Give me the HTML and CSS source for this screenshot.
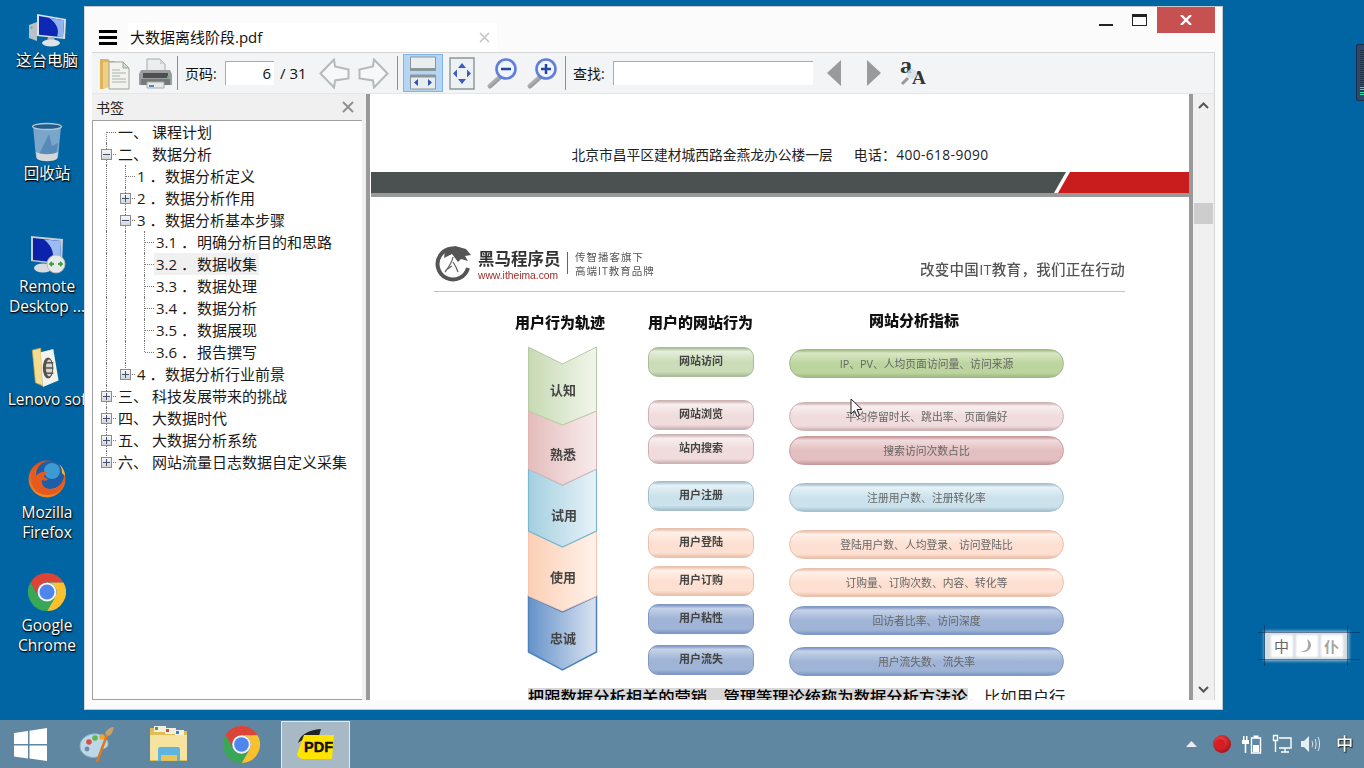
FILE: index.html
```html
<!DOCTYPE html>
<html lang="zh-CN">
<head>
<meta charset="utf-8">
<title>大数据离线阶段.pdf</title>
<link rel="stylesheet" href="styles.css">
</head>
<body>
<svg class="defs" width="0" height="0">
  <defs>
    <symbol id="chrome" viewBox="0 0 48 48">
      <path fill="#db4437" d="M3.2 12A24 24 0 0 1 44.8 12L24 12A12 12 0 0 0 13.6 30Z"/>
      <path fill="#fbc02d" d="M44.8 12A24 24 0 0 1 24 48L34.4 30A12 12 0 0 0 24 12Z"/>
      <path fill="#3aa757" d="M24 48A24 24 0 0 1 3.2 12L13.6 30A12 12 0 0 0 34.4 30Z"/>
      <circle cx="24" cy="24" r="12" fill="#f4f4f4"/>
      <circle cx="24" cy="24" r="9.5" fill="#4f86ec"/>
    </symbol>
    <symbol id="monitor" viewBox="0 0 40 36">
      <path fill="#b9c0c8" d="M2 14l8-3v19l-8 -3z"/>
      <path fill="#6fb36f" d="M3.5 15.5h2v2h-2z"/>
      <path fill="#dfe3e7" d="M10 3l29 5-1 20-28-3z"/>
      <path fill="#0c28b4" d="M12 5l25 4.300-1 17-24-2.600z"/>
      <path fill="#8fb4ee" d="M22 6.700l15 2.600-1 17-6-.7c3-7-1-14-8-18.900z"/>
      <path fill="#aeb6bd" d="M21 26h6l1 4h-8z"/>
      <ellipse cx="24" cy="32" rx="9" ry="3.500" fill="#dfe3e6"/>
    </symbol>
    <linearGradient id="zoomh" x1="0" y1="0" x2="1" y2="1"><stop offset="0" stop-color="#d8d8d8"/><stop offset="1" stop-color="#777"/></linearGradient>
    <linearGradient id="chG" x1="0" x2="1"><stop offset="0" stop-color="#c7d9b2"/><stop offset="1" stop-color="#f1f6ec"/></linearGradient>
    <linearGradient id="chR" x1="0" x2="1"><stop offset="0" stop-color="#e5bcbc"/><stop offset="1" stop-color="#f8ecec"/></linearGradient>
    <linearGradient id="chB" x1="0" x2="1"><stop offset="0" stop-color="#a3cfe0"/><stop offset="1" stop-color="#e8f3f8"/></linearGradient>
    <linearGradient id="chP" x1="0" x2="1"><stop offset="0" stop-color="#fbcfb6"/><stop offset="1" stop-color="#fff2ea"/></linearGradient>
    <linearGradient id="chN" x1="0" x2="1"><stop offset="0" stop-color="#6592c9"/><stop offset="1" stop-color="#dbe4f1"/></linearGradient>
    <radialGradient id="fox" cx=".45" cy=".75" r=".8"><stop offset="0" stop-color="#f9a12e"/><stop offset="1" stop-color="#d8451b"/></radialGradient>
    <radialGradient id="ball" cx=".4" cy=".35" r=".7"><stop offset="0" stop-color="#f0484c"/><stop offset="1" stop-color="#a80f14"/></radialGradient>
  </defs>
</svg>

<div class="desktop">
  <div class="icons">
    <div class="dicon">
      <svg class="dimg" width="40" height="36"><use href="#monitor"/></svg>
      <div class="dlabel">这台电脑</div>
    </div>
    <div class="dicon">
      <svg class="dimg" width="32" height="40" viewBox="0 0 32 40">
        <path fill="#7ba6cb" d="M2 4h28l-3 32H5z"/>
        <path fill="#3f78ad" d="M11 26l7-14 3 12 6-3-2 13H7z" opacity=".6"/>
        <path fill="#d5d8d8" d="M5 30c6 3 16 3 22 0l-1 7c-5 3-15 3-20 0z"/>
        <ellipse cx="16" cy="4.500" rx="14.500" ry="3" fill="#1e5e8e" stroke="#b7c4cc" stroke-width="1.300"/>
      </svg>
      <div class="dlabel">回收站</div>
    </div>
    <div class="dicon">
      <svg class="dimg" width="40" height="40" viewBox="0 0 40 40">
        <path fill="#c9ced3" d="M4 1l32 3-1 26-31-4z"/>
        <path fill="#0b22ab" d="M6 3l28 3-1 22-27-3z"/>
        <path fill="#9cbcf0" d="M17 4.500l17 1.500-1 22-8-1c3-8 0-16-8-22.500z"/>
        <ellipse cx="16" cy="33" rx="9" ry="4.500" fill="#d8dcdf"/>
        <circle cx="29" cy="29" r="9" fill="#e7eaea" stroke="#b5bcbc"/>
        <path fill="none" stroke="#3fa13a" stroke-width="1.800" d="M23 29h4m-2-2l-2 2 2 2M35 29h-4m2-2l2 2-2 2"/>
      </svg>
      <div class="dlabel">Remote<br>Desktop ...</div>
    </div>
    <div class="dicon">
      <svg class="dimg" width="32" height="42" viewBox="0 0 30 40">
        <path fill="#f5dc8e" stroke="#c8a24a" stroke-width=".7" d="M1 3l8-2 2 36-7-3z"/>
        <path fill="#f3f3ee" d="M9 5l12-3 5 30-15 6z"/>
        <ellipse cx="16" cy="20" rx="5" ry="10" fill="#55534e"/>
        <ellipse cx="17" cy="20" rx="3" ry="8" fill="#d8d6cf"/>
        <path stroke="#55534e" stroke-width="1.600" d="M13 15h8M13 20h8M13 25h8"/>
      </svg>
      <div class="dlabel">Lenovo sof</div>
    </div>
    <div class="dicon">
      <svg class="dimg dimg-top" width="38" height="38" viewBox="0 0 38 38">
        <circle cx="19" cy="19" r="18.500" fill="url(#fox)"/>
        <circle cx="22" cy="15" r="14" fill="#1d5ea8"/>
        <circle cx="24" cy="11" r="8" fill="#3d9bd4"/>
        <path fill="#e8591e" d="M5 8c-3 7-3 17 3 23 7 6 18 5 24-1 4-4 5-9 5-13-2 7-9 13-15 12-6 0-9-5-8-9 2 1 5 1 6-1l-4-2c0-2 1-3 3-5-5-1-9 1-11 4 0-3-2-6-3-8z"/>
        <path fill="#f8b33a" d="M31 4c4 3 6 8 6 12l-3-3c0-4-1-6-3-9z"/>
      </svg>
      <div class="dlabel">Mozilla<br>Firefox</div>
    </div>
    <div class="dicon">
      <svg class="dimg dimg-top" width="38" height="38"><use href="#chrome"/></svg>
      <div class="dlabel">Google<br>Chrome</div>
    </div>
  </div>

  <div class="sidegadget"><i class="gstripes"></i><i class="glights"></i></div>

  <div class="ime">
    <span class="imetile"><span class="imeglyph">中</span></span>
    <span class="imetile"><svg width="16" height="16" viewBox="0 0 18 18"><path fill="#a5a5a5" d="M9 1c6 3 6 11 0 14-2 1-5 1-8 0 4 0 8-1 9-5 1-3 0-6-1-9z"/></svg></span>
    <span class="imetile"><span class="imeglyph imegrey">仆</span></span>
  </div>

  <main class="window">
    <div class="titlebar">
      <div class="hamburger"><i></i><i></i><i></i></div>
      <div class="tab">
        <span class="tabtitle">大数据离线阶段.pdf</span>
        <svg class="tabx" width="11" height="11" viewBox="0 0 11 11"><path stroke="#c3c3c3" stroke-width="1.500" d="M1 1l9 9M10 1l-9 9"/></svg>
      </div>
      <div class="caption">
        <span class="capmin"></span>
        <span class="capmax"></span>
        <span class="capclose">
          <svg width="12" height="10" viewBox="0 0 12 10"><path stroke="#fff" stroke-width="2.400" d="M1 0l10 10M11 0L1 10"/></svg>
        </span>
      </div>
    </div>

    <div class="inner">
      <div class="toolbar">
        <svg class="ti ti-open" width="30" height="33" viewBox="0 0 30 33">
          <path fill="#dcb45c" d="M0 2h8l2 2h5v26H6l-3 2H0z"/>
          <path fill="#efd083" d="M3 5h9v24l-9 3z"/>
          <path fill="#f2f3ee" stroke="#9aa39a" d="M9 5h14l6 6v21H9z"/>
          <path stroke="#a9b2a9" d="M12 13h8M12 16h14M12 19h8M12 22h14M12 25h14"/>
          <path fill="#d4dad4" stroke="#9aa39a" d="M23 5v6h6z"/>
        </svg>
        <svg class="ti ti-print" width="33" height="31" viewBox="0 0 33 31">
          <path fill="#eceeed" stroke="#a4aaa8" d="M8 1h13l5 5v8H8z"/>
          <path fill="#cfd3d2" d="M21 1v5h5z"/>
          <path fill="#9b9e9e" d="M2 12h29l2 4v11H0V16z"/>
          <path fill="#4c4f50" d="M4 15h25v5H4z"/>
          <path fill="#757878" d="M2 21h29v6H2z"/>
          <path fill="#39c46e" d="M28 18h2v2h-2z"/>
          <path fill="#e7e9e8" stroke="#a4aaa8" d="M8 24h17v6H8z"/>
          <path fill="#4a8ac5" d="M10 27h5v2h-5z"/>
        </svg>
        <span class="tsep"></span>
        <span class="tlabel">页码:</span>
        <span class="tinput tpage">6</span>
        <span class="ttotal">/ 31</span>
        <svg class="ti ti-prev" width="31" height="31" viewBox="0 0 31 31">
          <path fill="#f7f8f9" stroke="#b4b9b9" stroke-width="2" d="M1.500 15.500L15 1.500l1 7 13.500 3v9L16 22.500l-1 7z"/>
        </svg>
        <svg class="ti ti-next" width="31" height="31" viewBox="0 0 31 31">
          <path fill="#f7f8f9" stroke="#b4b9b9" stroke-width="2" d="M29.500 15.500L16 1.500l-1 7-13.500 3v9l13.500 2 1 7z"/>
        </svg>
        <span class="tsep tsep2"></span>
        <span class="tbtn">
          <svg width="28" height="34" viewBox="0 0 28 34">
            <path fill="#e9edf0" stroke="#8b9696" d="M1.500 1h25v13h-25z"/>
            <path fill="#8b9696" d="M1 12h26v3H1z"/>
            <path fill="#e9edf0" stroke="#8b9696" d="M1.500 19h25v14h-25z"/>
            <path fill="#8b9696" d="M1 19h26v2.500H1z"/>
            <path fill="#2f55b7" d="M9 23v7l-4-3.500zM19 23v7l4-3.500z"/>
          </svg>
        </span>
        <svg class="ti ti-fit" width="26" height="33" viewBox="0 0 26 33">
          <path fill="#eef1f3" stroke="#8b9696" stroke-width="1.400" d="M1 1h24v31H1z"/>
          <path fill="#3b5cc0" d="M13 6l4 5H9zM13 27l4-5H9zM4 16.500l4-4v8zM22 16.500l-4-4v8z"/>
        </svg>
        <svg class="ti ti-z1" width="31" height="31" viewBox="0 0 31 31">
          <path stroke="url(#zoomh)" stroke-width="5" stroke-linecap="round" d="M13 19L3 28" fill="none"/>
          <circle cx="19" cy="11" r="9.500" fill="#f0f4fb" stroke="#5f7fdc" stroke-width="2.600"/>
          <path stroke="#2544a8" stroke-width="2.500" d="M14 11h10"/>
        </svg>
        <svg class="ti ti-z2" width="31" height="31" viewBox="0 0 31 31">
          <path stroke="url(#zoomh)" stroke-width="5" stroke-linecap="round" d="M13 19L3 28" fill="none"/>
          <circle cx="19" cy="11" r="9.500" fill="#f0f4fb" stroke="#5f7fdc" stroke-width="2.600"/>
          <path stroke="#2544a8" stroke-width="2.500" d="M14 11h10M19 6v10"/>
        </svg>
        <span class="tsep tsep3"></span>
        <span class="tlabel tfind">查找:</span>
        <span class="tinput tsearch"></span>
        <svg class="ti ti-a1" width="14" height="26" viewBox="0 0 14 26"><path fill="#9a9a9a" d="M14 0v26L0 13z"/></svg>
        <svg class="ti ti-a2" width="14" height="26" viewBox="0 0 14 26"><path fill="#9a9a9a" d="M0 0v26l14-13z"/></svg>
        <svg class="ti ti-aa" width="28" height="40" viewBox="0 -7 28 40">
          <text class="aa1" x="0" y="13">a</text>
          <text class="aa2" x="12" y="24">A</text>
          <circle cx="12" cy="14" r="5" fill="#cfe0ea" opacity=".8"/>
          <path stroke="#999" stroke-width="3" d="M8 18l-6 6"/>
        </svg>
      </div>

      <div class="main">
        <aside class="sidebar">
          <div class="sidehead">
            <span>书签</span>
            <svg width="12" height="12" viewBox="0 0 12 12"><path stroke="#8d8d8d" stroke-width="1.800" d="M1 1l10 10M11 1L1 11"/></svg>
          </div>
          <div class="tree">
            <div class="row"><span class="c c-top"></span><span class="lab"><span class="num n0">一、</span>课程计划</span></div>
            <div class="row"><span class="c c-tee"><i class="box"></i></span><span class="lab"><span class="num n0">二、</span>数据分析</span></div>
            <div class="row"><span class="c c-v"></span><span class="c c-tee"></span><span class="lab"><span class="num n1">1 ．</span>数据分析定义</span></div>
            <div class="row"><span class="c c-v"></span><span class="c c-tee"><i class="box plus"></i></span><span class="lab"><span class="num n1">2 ．</span>数据分析作用</span></div>
            <div class="row"><span class="c c-v"></span><span class="c c-tee"><i class="box"></i></span><span class="lab"><span class="num n1">3 ．</span>数据分析基本步骤</span></div>
            <div class="row"><span class="c c-v"></span><span class="c c-v"></span><span class="c c-tee"></span><span class="lab"><span class="num n2">3.1 ．</span>明确分析目的和思路</span></div>
            <div class="row"><span class="c c-v"></span><span class="c c-v"></span><span class="c c-tee"></span><span class="lab sel"><span class="num n2">3.2 ．</span>数据收集</span></div>
            <div class="row"><span class="c c-v"></span><span class="c c-v"></span><span class="c c-tee"></span><span class="lab"><span class="num n2">3.3 ．</span>数据处理</span></div>
            <div class="row"><span class="c c-v"></span><span class="c c-v"></span><span class="c c-tee"></span><span class="lab"><span class="num n2">3.4 ．</span>数据分析</span></div>
            <div class="row"><span class="c c-v"></span><span class="c c-v"></span><span class="c c-tee"></span><span class="lab"><span class="num n2">3.5 ．</span>数据展现</span></div>
            <div class="row"><span class="c c-v"></span><span class="c c-v"></span><span class="c c-end"></span><span class="lab"><span class="num n2">3.6 ．</span>报告撰写</span></div>
            <div class="row"><span class="c c-v"></span><span class="c c-end"><i class="box plus"></i></span><span class="lab"><span class="num n1">4 ．</span>数据分析行业前景</span></div>
            <div class="row"><span class="c c-tee"><i class="box plus"></i></span><span class="lab"><span class="num n0">三、</span>科技发展带来的挑战</span></div>
            <div class="row"><span class="c c-tee"><i class="box plus"></i></span><span class="lab"><span class="num n0">四、</span>大数据时代</span></div>
            <div class="row"><span class="c c-tee"><i class="box plus"></i></span><span class="lab"><span class="num n0">五、</span>大数据分析系统</span></div>
            <div class="row"><span class="c c-end"><i class="box plus"></i></span><span class="lab"><span class="num n0">六、</span>网站流量日志数据自定义采集</span></div>
          </div>
        </aside>
        <div class="splitter"></div>

        <section class="pdf">
          <div class="page-a">
            <div class="address"><span>北京市昌平区建材城西路金燕龙办公楼一层</span><span class="phone">电话：400-618-9090</span></div>
            <div class="band"><i class="band-red"></i></div>
          </div>
          <div class="page-b">
            <div class="brand">
              <svg class="logo" width="36" height="38" viewBox="0 0 36 38">
                <path fill="none" stroke="#555" stroke-width="4" d="M29 8a15.500 15.500 0 1 0 4 15"/>
                <path fill="#555" d="M10 6L20 1l11 3 5 6-6 1 3 5-7-2-3 3-6-8-8 4z"/>
                <path fill="none" stroke="#666" stroke-width="1.300" d="M18 12c-1 6-5 11-8 15M18 17c2 3 4 7 5 10M11 25l6-4"/>
              </svg>
              <div class="brandname">
                <div class="bn1">黑马程序员</div>
                <div class="bn2">www.itheima.com</div>
              </div>
              <i class="brandsep"></i>
              <div class="brandtag">
                <div>传智播客旗下</div>
                <div>高端IT教育品牌</div>
              </div>
              <div class="slogan">改变中国IT教育，我们正在行动</div>
            </div>

            <div class="diagram">
              <div class="dcol1">
                <div class="dhead">用户行为轨迹</div>
                <svg class="chev" width="71" height="326" viewBox="527 347 71 326">
                  <path fill="url(#chN)" stroke="#4f82bd" stroke-width="1.500" d="M528.500 597l34 16 34-16v56l-34 18-34-18z"/>
                  <path fill="url(#chP)" stroke="#f5c6ad" d="M528.500 532l34 16 34-16v65l-34 15-34-15z"/>
                  <path fill="url(#chB)" stroke="#78b7cf" stroke-width="1.200" d="M528.500 470l34 16 34-16v62l-34 16-34-16z"/>
                  <path fill="url(#chR)" stroke="#e2b3b3" d="M528.500 412l34 14 34-14v58l-34 16-34-16z"/>
                  <path fill="url(#chG)" stroke="#b7cba4" d="M528.500 348l34 17 34-17v64l-34 14-34-14z"/>
                  <text class="chevt" x="563" y="396">认知</text>
                  <text class="chevt" x="563" y="460">熟悉</text>
                  <text class="chevt" x="564" y="521">试用</text>
                  <text class="chevt" x="563" y="583">使用</text>
                  <text class="chevt" x="563" y="644">忠诚</text>
                </svg>
              </div>
              <div class="dcols">
                <div class="dheads">
                  <div class="dhead dh2">用户的网站行为</div>
                  <div class="dhead dh3">网站分析指标</div>
                </div>
                <div class="pills">
                  <div class="pill green">网站访问</div><div class="wide green2">IP、PV、人均页面访问量、访问来源</div>
                  <div class="pill pink">网站浏览</div><div class="wide pink">平均停留时长、跳出率、页面偏好</div>
                  <div class="pill pink">站内搜索</div><div class="wide rose">搜索访问次数占比</div>
                  <div class="pill sky">用户注册</div><div class="wide sky">注册用户数、注册转化率</div>
                  <div class="pill peach">用户登陆</div><div class="wide peach">登陆用户数、人均登录、访问登陆比</div>
                  <div class="pill peach">用户订购</div><div class="wide peach">订购量、订购次数、内容、转化等</div>
                  <div class="pill navy">用户粘性</div><div class="wide navy">回访者比率、访问深度</div>
                  <div class="pill navy">用户流失</div><div class="wide navy">用户流失数、流失率</div>
                </div>
              </div>
            </div>

            <p class="para"><mark>把跟数据分析相关的营销、管理等理论统称为数据分析方法论</mark>，比如用户行</p>
          </div>
        </section>
        <div class="vline"></div>
        <div class="scroll">
          <svg class="sarrow" width="11" height="7" viewBox="0 0 11 7"><path fill="none" stroke="#555" stroke-width="2" d="M1 6l4.500-4.500L10 6"/></svg>
          <div class="sthumb"></div>
          <svg class="sarrow sdown" width="11" height="7" viewBox="0 0 11 7"><path fill="none" stroke="#555" stroke-width="2" d="M1 1l4.500 4.500L10 1"/></svg>
        </div>
      </div>
    </div>
    <svg class="cursor" width="14" height="20" viewBox="0 0 14 20"><path fill="#fff" stroke="#222" d="M1 1v15l3.500-3.500 2.500 6 2.500-1-2.500-6h5z"/></svg>
  </main>
</div>

<footer class="taskbar">
  <svg class="tb-win" width="33" height="33" viewBox="0 0 33 33"><path fill="#fff" d="M0 5l14-2v13H0zM15.500 2.800L33 0v16H15.500zM0 17.500h14v13L0 28.500zM15.500 17.500H33V33l-17.500-2.500z"/></svg>
  <svg class="tb-paint" width="38" height="38" viewBox="0 0 38 38">
    <path fill="#bcd8e8" stroke="#8fb2c8" d="M2 21c0-8 9-13 17-12 7 1 11 5 11 10 0 4-4 4-6 6-2 3-1 6-5 7-8 2-17-3-17-11z"/>
    <circle cx="11" cy="17" r="2.800" fill="#e04b3f"/><circle cx="17" cy="13" r="2.800" fill="#5cb848"/><circle cx="24" cy="12" r="2.800" fill="#f2a62e"/><circle cx="9" cy="24" r="2.400" fill="#6a8caa"/>
    <path stroke="#d9791e" stroke-width="2.600" d="M29 10L19 37"/>
    <path fill="#c9a06a" d="M27 9c1-4 5-7 9-7-1 4-2 8-6 9z"/>
  </svg>
  <svg class="tb-folder" width="40" height="40" viewBox="0 0 40 40">
    <path fill="#e2bd55" d="M1 4h14l2 3h21v30H1z"/>
    <path fill="#f3f0df" d="M5 2h12v6H5zM16 4h11v6H16zM26 6h9v6h-9z"/>
    <path fill="#46a14a" d="M6 3h3v3H6z"/><path fill="#d8483e" d="M17 5h3v3h-3z"/><path fill="#3d7fc2" d="M27 7h3v3h-3z"/>
    <path fill="#f7e3a0" d="M1 11h37v25H1z"/>
    <path fill="#5eb5e0" d="M9 25c0-1 1-2 2-2h18c1 0 2 1 2 2v12h-3v-6H12v6H9z"/>
    <path fill="#e8c45c" d="M12 31h16v5H12z"/>
  </svg>
  <svg class="tb-chrome" width="37" height="37"><use href="#chrome"/></svg>
  <div class="tb-active">
    <svg class="pdficon" width="38" height="32" viewBox="0 0 38 32">
      <path fill="#222" d="M1 14C3 6 11 1 24 0l-2 7C13 8 6 10 1 14z"/>
      <path fill="#ffe400" d="M7 6h30l-2 24H6c-3 0-6-3-6-5z"/>
      <text class="pdftext" x="7" y="23">PDF</text>
    </svg>
  </div>
  <div class="tray">
    <svg class="tr-caret" width="11" height="6" viewBox="0 0 11 6"><path fill="#e8eef2" d="M5.500 0L11 6H0z"/></svg>
    <svg class="tr-ball" width="20" height="20" viewBox="0 0 20 20"><circle cx="10" cy="10" r="9" fill="url(#ball)"/><circle cx="8" cy="10" r="5" fill="#d91c22"/></svg>
    <svg class="tr-batt" width="20" height="20" viewBox="0 0 20 20"><path fill="#fff" d="M1 2h1.500v4H1zM4 2h1.500v4H4zM0 6h7v4H4.300v9H2.700v-9H0z"/><path fill="none" stroke="#fff" stroke-width="1.400" d="M9.500 4h9v15h-9z"/><path fill="#fff" d="M11.500 1.500h5V4h-5zM11 11h6v7h-6z"/></svg>
    <svg class="tr-net" width="20" height="20" viewBox="0 0 20 20"><g fill="none" stroke="#fff" stroke-width="1.400"><path d="M1.500 1.500h4v5h-4zM3.500 6.500V18M7 4h12v10H7M13 14v4M9 18h8"/></g></svg>
    <svg class="tr-vol" width="20" height="20" viewBox="0 0 20 20"><path fill="#e8eef2" d="M0 7h3l5-5v16l-5-5H0z"/><path fill="none" stroke="#e8eef2" d="M11 7c1 2 1 4 0 6M14 5c1.500 3 1.500 7 0 10M17 3c2 4 2 10 0 14"/></svg>
    <span class="tr-ime">中</span>
  </div>
</footer>
</body>
</html>
```
FILE: styles.css
```css
* { box-sizing: border-box; }
html, body { margin: 0; height: 768px; overflow: hidden; }
body {
  width: 1364px;
  display: flex;
  flex-direction: column;
  background: #0165a3;
  font-family: "Open Sans", "Noto Sans CJK SC", sans-serif;
  color: #111;
}
.defs { position: absolute; }

.desktop { position: relative; height: 720px; flex: none; }

/* Desktop icons */
.icons { width: 86px; margin-left: 4px; padding-top: 8px; display: flex; flex-direction: column; }
.dicon { height: 113px; display: flex; flex-direction: column; align-items: center; }
.dimg { height: 42px; flex: none; }
.dimg-top { height: 38px; margin-bottom: 4px; }
.dlabel {
  margin-top: 0;
  width: 100%;
  text-align: center;
  white-space: nowrap;
  font-size: 15.500px;
  line-height: 20px;
  color: #fff;
  text-shadow: 1px 1px 2px #000, 0 1px 1px #000;
}

/* Right gadget + floating IME bar */
.sidegadget {
  position: absolute; left: 1356px; top: 44px; width: 8px; height: 57px;
  background: #30486b; border: 1px solid #1c2f4a; border-right: 0; border-radius: 3px 0 0 3px;
  display: flex; flex-direction: column; justify-content: flex-end; padding: 5px 0 5px 3px;
}
.gstripes { flex: 1; background: repeating-linear-gradient(180deg, #1c2f44 0 1px, #3a5067 1px 2px); }
.glights { height: 8px; background: repeating-linear-gradient(180deg, #3ce0b0 0 1px, #1c3c50 1px 2.500px); }
.ime {
  position: absolute; left: 1265px; top: 632px; width: 83px; height: 28px;
  background: #d5dde3; display: flex; align-items: center; justify-content: space-around;
  padding: 0 4px;
  box-shadow: 0 0 3px 1px rgba(215, 228, 236, .7);
}
.ime::before {
  content: ""; position: absolute; left: -7px; right: -12px; top: 0; bottom: 0;
  border-top: 1px solid rgba(10, 40, 80, .55); border-bottom: 1px solid rgba(10, 40, 80, .55);
}
.ime::after {
  content: ""; position: absolute; left: -1px; right: 0; top: -7px; bottom: -6px;
  border-left: 1px solid rgba(10, 40, 80, .55); border-right: 1px solid rgba(10, 40, 80, .55);
}
.imetile {
  width: 20px; height: 20px; background: #fff; box-shadow: 0 0 2px 1px #fff;
  display: flex; align-items: center; justify-content: center;
}
.imetile svg { display: block; }
.imeglyph { font-size: 15px; color: #666; line-height: 1; }
.imegrey { color: #a5a5a5; font-weight: 700; }

/* Window */
.window {
  position: absolute; left: 84px; top: 6px; width: 1139px; height: 704px;
  background: #fbfbfc; border: 1px solid #c8c8c8; border-left-color: #d8d8d8;
  display: flex; flex-direction: column;
}
.titlebar { height: 45px; flex: none; display: flex; }
.hamburger { width: 18px; margin: 23px 11px 0 14px; display: flex; flex-direction: column; gap: 3px; }
.hamburger i { height: 3px; background: #000; display: block; }
.tab {
  width: 369px; height: 29px; margin-top: 16px; background: #fff;
  display: flex; align-items: center; justify-content: space-between;
  padding: 0 7px 0 2px;
}
.tabtitle { font-size: 15px; line-height: 29px; }
.caption { margin-left: auto; margin-right: 7px; display: flex; align-items: flex-start; }
.capmin { width: 14px; height: 2px; background: #222; margin: 17px 19px 0 0; }
.capmax { width: 15px; height: 12px; border: 1px solid #222; border-top-width: 3px; margin: 7px 10px 0 0; }
.capclose { width: 58px; height: 26px; background: #c75050; display: flex; align-items: center; justify-content: center; }
.capclose svg { display: block; }

.inner { margin: 0 7px; flex: none; display: flex; flex-direction: column; }

/* Toolbar */
.toolbar {
  height: 42px; background: #f3f4f6;
  border-top: 1px solid #d6d6d6; border-right: 1px solid #d6d6d6; border-bottom: 1px solid #e6e6e6;
  display: flex; align-items: center; font-size: 14px; padding-left: 8px;
}
.ti { flex: none; display: block; }
.ti-print { margin-left: 9px; }
.tsep { width: 1px; height: 34px; background: #8f8f8f; margin-left: 5px; flex: none; }
.tlabel { margin-left: 7px; width: 35px; flex: none; font-size: 14px; }
.tinput {
  height: 24px; background: #fff; flex: none;
  border-left: 1px solid #aaa; border-top: 1px solid #aaa;
  display: block;
}
.tpage { width: 49px; margin-left: 5px; text-align: right; padding-right: 3px; font-size: 15px; line-height: 23px; }
.ttotal { width: 33px; margin-left: 6px; font-size: 15px; flex: none; }
.ti-prev { margin-left: 6px; }
.ti-next { margin-left: 8px; }
.tsep2 { margin-left: 8px; }
.tbtn {
  width: 40px; height: 38px; margin-left: 5px; flex: none;
  background: #b6d5f5; border: 1px solid #7eb4ea;
  display: flex; align-items: center; justify-content: center;
}
.tbtn svg { display: block; }
.ti-fit { margin-left: 6px; }
.ti-z1 { margin-left: 12px; }
.ti-z2 { margin-left: 9px; }
.tsep3 { margin-left: 7px; }
.tfind { width: 34px; }
.tsearch { width: 200px; margin-left: 6px; }
.ti-a1 { margin-left: 14px; }
.ti-a2 { margin-left: 26px; }
.ti-aa { margin-left: 19px; }
.aa1, .aa2 { font-family: "Liberation Serif", serif; font-weight: 700; fill: #333; }
.aa1 { font-size: 24px; }
.aa2 { font-size: 19px; }

/* Main row */
.main { height: 606px; display: flex; }
.sidebar { width: 274px; flex: none; background: #f0f0f0; display: flex; flex-direction: column; padding-right: 4px; }
.sidehead {
  height: 26px; flex: none; display: flex; align-items: center; justify-content: space-between;
  padding: 0 8px 0 4px; font-size: 14px; color: #222;
}
.sidehead svg { display: block; }
.tree {
  flex: 1; background: #fff; border: 1px solid #a0a0a0; border-right: 0;
  padding-left: 4px; font-size: 15px; color: #1a1a1a; overflow: hidden;
}
.row { height: 22px; display: flex; align-items: center; white-space: nowrap; }
.c { width: 19px; height: 22px; position: relative; flex: none; display: block; }
.c-v::before, .c-tee::before, .c-end::before, .c-top::before {
  content: ""; position: absolute; left: 9px; top: 0; bottom: 0; border-left: 1px dotted #777;
}
.c-end::before { bottom: 11px; }
.c-top::before { top: 11px; }
.c-tee::after, .c-end::after, .c-top::after {
  content: ""; position: absolute; left: 10px; right: 0; top: 11px; border-top: 1px dotted #777;
}
.box {
  position: absolute; left: 4px; top: 6px; width: 11px; height: 11px; z-index: 1;
  border: 1px solid #8c8c8c; background: linear-gradient(180deg, #f8f8f8, #d5d5d5);
}
.box::before { content: ""; position: absolute; left: 1px; right: 1px; top: 4px; height: 1px; background: #3d4f75; }
.plus::after { content: ""; position: absolute; top: 1px; bottom: 1px; left: 4px; width: 1px; background: #3d4f75; }
.lab { margin-left: 0; padding: 0 2px; line-height: 22px; height: 22px; display: block; }
.sel { background: #f0f0f0; }
.num { display: inline-block; }
.n0 { width: 34px; }
.n1 { width: 28px; }
.n2 { width: 41px; }

.splitter { width: 5px; flex: none; background: #999; border-right: 1px solid #fff; }

/* PDF */
.pdf { width: 818px; flex: none; background: #fff; display: flex; flex-direction: column; overflow: hidden; position: relative; }
.page-a { height: 99px; flex: none; display: flex; flex-direction: column; justify-content: flex-end; border-bottom: 0; }
.address { display: flex; justify-content: center; gap: 21px; font-size: 13.750px; line-height: 20px; color: #222; margin-bottom: 7px; }
.phone { letter-spacing: .4px; }
.band { height: 21px; background: #4b5050; position: relative; }
.band-red {
  position: absolute; right: 0; top: 0; bottom: 0; width: 133px;
  background: #c91c1c; clip-path: polygon(14px 0, 100% 0, 100% 100%, 0 100%);
}
.band::after {
  content: ""; position: absolute; right: 133px; top: 0; bottom: 0; width: 16px; margin-right: -14px;
  background: #fff; clip-path: polygon(12px 0, 100% 0, 4px 100%, 0 100%);
}
.page-b { flex: 1; margin-top: 0; border-top: 4px solid #999; overflow: hidden; min-height: 0; }

.brand {
  margin: 48px 64px 0 63px; height: 47px; border-bottom: 1px solid #c4c4c4;
  display: flex; align-items: flex-start; filter: blur(.25px);
}
.logo { margin-left: 1px; flex: none; }
.brandname { margin-left: 7px; width: 84px; }
.bn1 { font-size: 16.500px; line-height: 22px; font-weight: 700; color: #333; margin-top: 3px; white-space: nowrap; }
.bn2 { font-size: 10.300px; line-height: 11px; color: #a62a2a; font-family: "Liberation Sans", sans-serif; white-space: nowrap; }
.brandsep { width: 1px; height: 22px; background: #666; margin: 7px 0 0 5px; flex: none; }
.brandtag { margin-left: 7px; font-size: 10.500px; line-height: 14px; letter-spacing: 1px; color: #555; padding-top: 5px; white-space: nowrap; }
.slogan { margin-left: auto; margin-top: 15px; font-size: 14.500px; line-height: 20px; font-weight: 500; color: #555; letter-spacing: .3px; white-space: nowrap; }

.diagram { display: flex; margin: 20px 0 0 144px; filter: blur(.45px); }
.dcol1 { width: 91px; margin-right: 42px; flex: none; }
.dhead { font-size: 15px; line-height: 20px; font-weight: 900; color: #111; white-space: nowrap; }
.chev { display: block; margin: 14px 0 0 12px; }
.chevt { font-size: 13px; font-weight: 700; fill: #444; text-anchor: middle; }
.dcols { flex: none; }
.dheads { display: flex; height: 35px; }
.dh2 { width: 106px; }
.dh3 { margin-left: 115px; margin-top: -2px; }
.pills {
  display: grid;
  grid-template-columns: 106px 275px;
  column-gap: 35px;
  grid-template-rows: 53px 34px 47px 47px 38px 38px 41px 30px;
}
.pill, .wide {
  display: flex; align-items: center; justify-content: center;
  white-space: nowrap;
  background: linear-gradient(180deg, var(--edge) 0, var(--hi) 12%, var(--base) 50%, var(--base) 85%, var(--edge) 100%);
  border: 1px solid var(--edge);
}
.pill { height: 30px; border-radius: 10px; font-size: 11px; font-weight: 700; color: #444; padding-bottom: 4px; }
.wide { height: 29px; margin-top: 2px; border-radius: 14.500px; font-size: 10.800px; color: #666; padding-bottom: 2px; }
.green { --base: #cbdcb8; --hi: #e5eedb; --edge: #a9bb97; }
.green2 { --base: #bcd49d; --hi: #d9e8c5; --edge: #a0b985; }
.pink { --base: #f0dcdd; --hi: #f8eeee; --edge: #cdb2b4; }
.rose { --base: #e3bfc1; --hi: #f1dbdc; --edge: #c89a9c; }
.sky { --base: #cbe2ec; --hi: #e6f2f6; --edge: #a5c0cd; }
.peach { --base: #fde0d1; --hi: #fff0e8; --edge: #e8c0ab; }
.navy { --base: #9fb4d6; --hi: #c5d2e7; --edge: #7e97c4; }

.para {
  margin: 13px 0 0 157px; font-size: 16.300px; line-height: 20px; white-space: nowrap;
  font-family: "Liberation Serif", "Noto Sans CJK SC", serif; color: #222;
}
.para mark { background: #d8d8d8; color: #000; font-weight: 500; }

.vline { width: 4px; flex: none; background: #999; }
.scroll { width: 22px; flex: none; background: #f0f0f0; border-right: 1px solid #d6d6d6; display: flex; flex-direction: column; align-items: center; padding-top: 8px; }
.sarrow { display: block; flex: none; }
.sthumb { width: 19px; height: 21px; background: #cdcdcd; margin-top: 94px; flex: none; }
.sdown { margin-top: auto; margin-bottom: 7px; }

.cursor { position: absolute; left: 765px; top: 391px; }

/* Taskbar */
.taskbar {
  height: 48px; flex: none; background: #5f87a2; display: flex; align-items: center; padding-left: 14px; position: relative;
}
.taskbar svg { display: block; flex: none; }
.tb-paint { margin-left: 31px; }
.tb-folder { margin-left: 33px; }
.tb-chrome { margin-left: 34px; }
.tb-active {
  width: 69px; height: 47px; margin: 1px 0 0 21px; flex: none;
  background: #a8b9c6; border: 1px solid #e4e9ec; border-bottom: 0;
  display: flex; align-items: center; justify-content: center;
}
.pdftext { font-family: "Liberation Sans", sans-serif; font-weight: 700; font-size: 14.500px; fill: #111; stroke: #111; stroke-width: .4px; }
.tray { margin-left: auto; display: flex; align-items: center; padding-right: 11px; }
.tr-caret { margin-right: 15px; }
.tr-ball { margin-right: 10px; }
.tr-batt { margin-right: 10px; }
.tr-net { margin-right: 9px; }
.tr-vol { margin-right: 15px; }
.tr-ime { font-size: 17px; color: #fff; font-weight: 500; text-shadow: 0 0 1px #111, 1px 1px 1px #222; line-height: 20px; }
```
